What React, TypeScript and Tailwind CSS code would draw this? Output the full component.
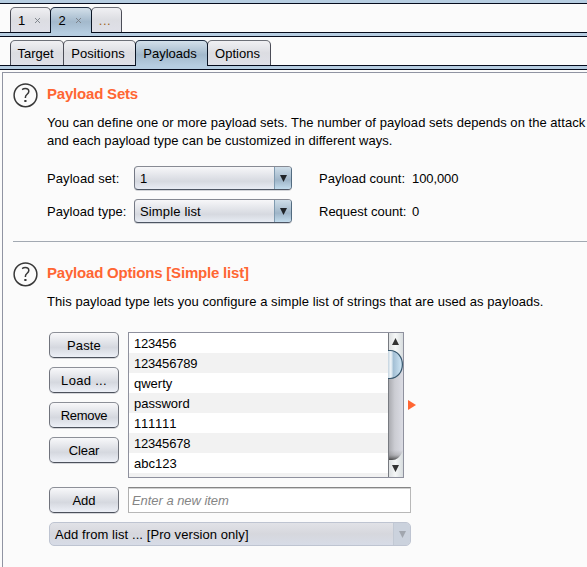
import React from "react";

function Tab({ label, width, active, closable, tracking = "" }: { label: string; width: string; active?: boolean; closable?: boolean; tracking?: string }) {
  return (
    <div
      className={`-mr-px flex shrink-0 items-center justify-center rounded-t-[5px] border pr-[3px] ${width} ${tracking} ${
        active
          ? "z-10 h-[26px] border-b-0 border-x-[#0b1626] border-t-[#1c2b3f] bg-linear-to-b from-[#d3e0ea] via-[#a3b9cc] via-55% to-[#b6cde1]"
          : "h-[25px] border-b-0 border-x-[#4b4d57] border-t-[#6d7078] bg-linear-to-b from-[#f0f0f3] via-[#dcdde2] via-50% to-[#dfe0e8] pt-px"
      }`}
    >
      <span>{label}</span>
      {closable && (
        <svg className="ml-[10px] size-[5px]" viewBox="0 0 5 5" stroke="#777d84" strokeWidth=".9">
          <path d="M0 0L5 5M5 0L0 5" />
        </svg>
      )}
    </div>
  );
}

function TabRow({ children }: { children: React.ReactNode }) {
  return (
    <div className="flex h-[29px] items-start bg-[#fbfbfb] bg-[linear-gradient(to_top,#050b1c_1px,transparent_1px)] pt-[3px] pl-[10px]">
      {children}
    </div>
  );
}

function Strip() {
  return <div className="h-1 border-b border-[#050b1c] bg-[#b6cde1]" />;
}

function Help() {
  return (
    <svg className="size-[25px] shrink-0" viewBox="0 0 25 25" fill="none" stroke="#383838">
      <circle cx="12.5" cy="12.3" r="11.4" strokeWidth="1.5" />
      <path d="M9.1 6.6C10.1 5.9 11.1 5.6 12.3 5.6C14.6 5.6 15.8 6.8 15.8 8.4C15.8 11 12.4 11.4 12.4 14.2V15" strokeWidth="1.5" />
      <path d="M12.4 17V19" strokeWidth="2.2" />
    </svg>
  );
}

function Arrow({ color = "#202428" }: { color?: string }) {
  return (
    <svg className="h-[7px] w-[7px]" viewBox="0 0 7 7" fill={color}>
      <path d="M0 0L3.5 7L7 0Z" />
    </svg>
  );
}

function Select({ value, tracking = "" }: { value: string; tracking?: string }) {
  return (
    <div className="flex h-6 w-[158px] overflow-hidden rounded-[4px] border border-t-[#878a93] border-r-[#526b80] border-b-[#4d5563] border-l-[#747985] bg-linear-to-b from-[#f7f7f9] via-[#d6d9e0] via-65% to-[#e8ecf4] shadow-[0_1px_0_#d2d4d8]">
      <div className={`flex flex-1 items-center pt-[2px] pl-[5px] ${tracking}`}>{value}</div>
      <div className="flex w-[17px] items-center justify-center border-l border-[#809bb0] bg-linear-to-b from-[#cfdee9] via-[#9fb5c8] via-60% to-[#c3dced]">
        <Arrow />
      </div>
    </div>
  );
}

function Button({ label, tracking = "" }: { label: string; tracking?: string }) {
  return (
    <button className={`flex h-[26px] w-[70px] shrink-0 items-center justify-center rounded-[5px] border border-t-[#8d9098] border-r-[#70737c] border-b-[#4c515c] border-l-[#70737c] bg-linear-to-b from-[#f8f8fa] via-[#d5d8df] via-60% to-[#edf0f7] pt-[2px] shadow-[0_1px_0_#d5d6da] ${tracking}`}>
      {label}
    </button>
  );
}

const items = ["123456", "123456789", "qwerty", "password", "111111", "12345678", "abc123"];

export default function App() {
  return (
    <div className="flex h-[567px] w-[587px] flex-col overflow-hidden bg-[#fbfbfb] font-['Liberation_Sans',Arial,sans-serif] text-[13px] leading-[18px] whitespace-nowrap text-black">
      <Strip />
      <TabRow>
        <Tab label="1" width="w-[41px]" closable />
        <Tab label="2" width="w-[42px]" active closable />
        <div className="flex text-[#a0661c]">
          <Tab label="..." width="w-[31px]" tracking="tracking-[0.6px]" />
        </div>
      </TabRow>
      <Strip />
      <TabRow>
        <Tab label="Target" width="w-[54px]" />
        <Tab label="Positions" width="w-[73px]" tracking="tracking-[0.1px]" />
        <Tab label="Payloads" width="w-[73px]" active />
        <Tab label="Options" width="w-[64px]" />
      </TabRow>
      <Strip />
      <main className="mt-[2px] ml-[2px] flex-1 border-t border-l border-[#9094a2] pl-[10px]">
        <section className="flex h-[169px] border-b border-[#a2a9b2] pt-[10px]">
          <Help />
          <div className="ml-[9px] flex flex-col">
            <h2 className="mt-[2px] text-[15px] font-bold tracking-[-0.2px] text-[#ff6633]">Payload Sets</h2>
            <p className="mt-[11px] tracking-[0.03px]">
              You can define one or more payload sets. The number of payload sets depends on the attack
              <br />
              <span>and each payload type can be customized in different ways.</span>
            </p>
            <div className="mt-4 grid grid-cols-[87px_185px_93px_auto] items-center gap-y-[9px]">
              <span className="pt-[2px] tracking-[0.08px]">Payload set:</span>
              <Select value="1" />
              <span className="pt-[2px]">Payload count:</span>
              <span className="pt-[2px] tracking-[-0.1px]">100,000</span>
              <span className="pt-[2px] tracking-[0.05px]">Payload type:</span>
              <Select value="Simple list" tracking="tracking-[0.15px]" />
              <span className="pt-[2px]">Request count:</span>
              <span className="pt-[2px]">0</span>
            </div>
          </div>
        </section>
        <section className="flex pt-5">
          <Help />
          <div className="ml-[9px]">
            <h2 className="mt-[2px] text-[15px] font-bold tracking-[-0.2px] text-[#ff6633]">Payload Options [Simple list]</h2>
            <p className="mt-[11px] tracking-[0.058px]">This payload type lets you configure a simple list of strings that are used as payloads.</p>
          </div>
        </section>
        <section className="mt-[21px] ml-9 flex flex-col">
          <div className="flex">
            <div className="flex flex-col gap-[9px]">
              <Button label="Paste" tracking="tracking-[0.15px]" />
              <Button label="Load ..." tracking="tracking-[0.3px]" />
              <Button label="Remove" tracking="tracking-[-0.3px]" />
              <Button label="Clear" tracking="tracking-[-0.1px]" />
            </div>
            <div className="ml-[9px] flex h-[146px] w-[276px] border border-[#8f919e] bg-white">
              <div className="flex-1 overflow-hidden [font-kerning:none]">
                {items.map((item, i) => (
                  <div key={item} className={`flex h-5 items-center pt-[2px] pl-[5px] ${/^\d+$/.test(item) ? "tracking-[-0.2px]" : ""} ${i % 2 ? "bg-[#f2f2f2]" : "bg-white"}`}>
                    {item}
                  </div>
                ))}
                <div className="h-5 bg-[#f2f2f2]" />
              </div>
              <svg className="h-[144px] w-[15px]" viewBox="0 0 15 144">
                <defs>
                  <linearGradient id="cap"><stop stopColor="#dadddf" /><stop offset=".5" stopColor="#f5f7f7" /><stop offset="1" stopColor="#d8dddf" /></linearGradient>
                  <linearGradient id="track"><stop stopColor="#a5a6ab" /><stop offset=".45" stopColor="#cbccd2" /><stop offset="1" stopColor="#dbdce4" /></linearGradient>
                  <linearGradient id="thumb"><stop stopColor="#c3d3df" /><stop offset=".2" stopColor="#f2f7fa" /><stop offset=".38" stopColor="#a4c0d5" /><stop offset="1" stopColor="#d1e8f7" /></linearGradient>
                  <linearGradient id="shade" x2="0" y2="1"><stop stopColor="#777" stopOpacity="0" /><stop offset=".5" stopColor="#666" stopOpacity=".25" /><stop offset="1" stopColor="#333" stopOpacity=".85" /></linearGradient>
                </defs>
                <path fill="url(#cap)" d="M0 0H15V144H0Z" />
                <path fill="url(#track)" d="M0 24H15V118Q11 127 4 127H0Z" />
                <path fill="url(#shade)" d="M0 117H15V118Q11 127 4 127H0Z" />
                <path fill="none" stroke="#777a80" d="M.5 0V144" />
                <path fill="url(#thumb)" stroke="#36566c" strokeWidth="1.2" d="M0 17.5H2C18.5 18 18.5 45 2 45.5H0" />
                <path fill="#333" d="M4 12L7.5 5L11 12ZM4 132H11L7.5 139Z" />
              </svg>
            </div>
            <svg className="mt-[68px] ml-1 h-[10px] w-2" viewBox="0 0 8 10" fill="#ff6633">
              <path d="M0 0L8 5L0 10Z" />
            </svg>
          </div>
          <div className="mt-[9px] flex gap-[9px]">
            <Button label="Add" />
            <input
              placeholder="Enter a new item"
              className="h-[26px] w-[283px] border border-t-[#858585] border-r-[#b8b8b8] border-b-[#b8b8b8] border-l-[#b0b0b0] bg-white pl-[3px] italic tracking-[-0.05px] shadow-[inset_0_1px_0_#d0d0d0] placeholder:text-[#858585]"
            />
          </div>
          <div className="mt-[9px] flex h-6 w-[362px] overflow-hidden rounded-[5px] border border-[#bec4d1] bg-linear-to-b from-[#e1e2e7] via-[#d6d7dd] to-[#d7dce7]">
            <div className="flex flex-1 items-center pt-[2px] pl-[5px] tracking-[0.08px]">Add from list ... [Pro version only]</div>
            <div className="flex w-[17px] items-center justify-center border-l border-[#c2c9d4] bg-[#cbd2dd]">
              <Arrow color="#a1a6ae" />
            </div>
          </div>
        </section>
      </main>
    </div>
  );
}
